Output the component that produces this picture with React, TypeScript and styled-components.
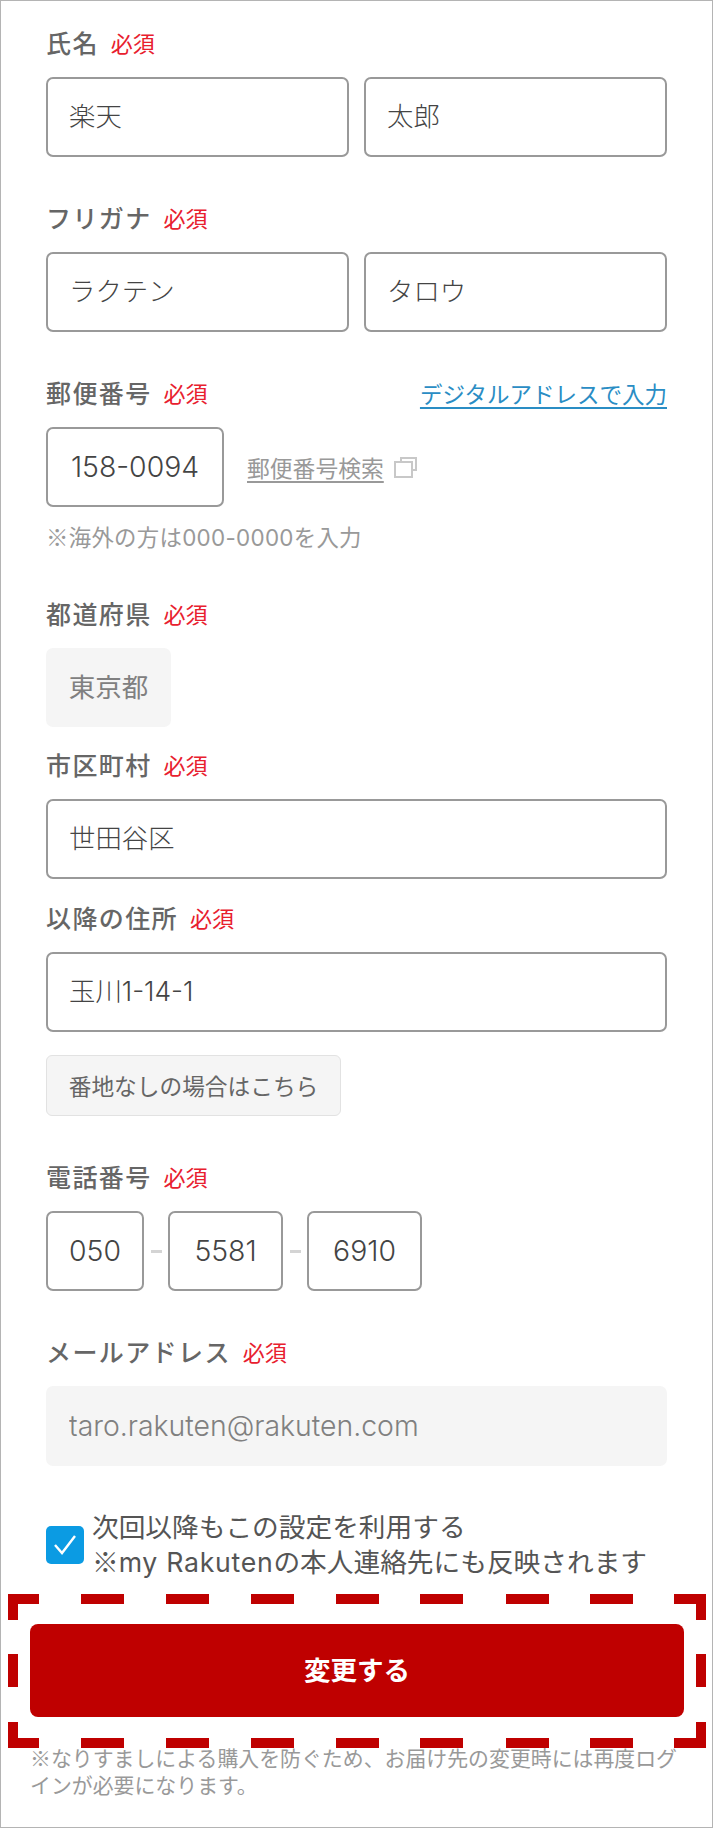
import React from 'react';
import styled, { createGlobalStyle } from 'styled-components';

const GlobalStyle = createGlobalStyle`
	html, body {
		margin: 0;
		padding: 0;
		background: #fff;
	}
	* {
		box-sizing: border-box;
	}
	body {
		font-family: Inter, "Noto Sans CJK JP", sans-serif;
	}
`;

const Page = styled.div`
	width: 713px;
	height: 1828px;
	border: 1px solid #b4b4b4;
	padding-top: 28px;
	overflow: hidden;
`;

const Form = styled.div`
	padding: 0 45px;
`;

const Field = styled.div<{ $bottom?: number }>`
	margin-bottom: ${({ $bottom }) => $bottom ?? 47}px;
`;

const LabelRow = styled.div`
	display: flex;
	align-items: center;
	justify-content: space-between;
	height: 32px;
	margin-bottom: 16px;
`;

const LabelGroup = styled.div`
	display: flex;
	align-items: center;
	gap: 12px;
	margin-bottom: 6px;
`;

const Label = styled.span`
	font-size: 25px;
	letter-spacing: 1.4px;
	font-weight: 500;
	color: #666;
`;

const Required = styled.span`
	font-size: 22px;
	color: #e8202e;
`;

const BlueLink = styled.a`
	font-size: 22.5px;
	line-height: 30px;
	color: #2a8dc4;
	text-decoration: underline;
	text-underline-offset: 4px;
`;

const Row = styled.div`
	display: flex;
	align-items: center;
	gap: 15px;
`;

const TextInput = styled.input<{ $center?: boolean; $width?: number; $muted?: boolean; $latin?: boolean }>`
	display: block;
	flex: ${({ $width }) => ($width ? `0 0 ${$width}px` : '1 1 0')};
	width: ${({ $width }) => ($width ? `${$width}px` : '100%')};
	min-width: 0;
	height: 80px;
	padding: ${({ $center }) => ($center ? '0' : '0 21px')};
	padding-bottom: ${({ $latin }) => ($latin ? 2 : 6)}px;
	border: ${({ $muted }) => ($muted ? 'none' : '2px solid #999')};
	${({ $muted }) => ($muted ? 'padding-left: 23px;' : '')}
	border-radius: 7px;
	outline: none;
	background: ${({ $muted }) => ($muted ? '#f5f5f5' : '#fff')};
	font-family: inherit;
	font-size: ${({ $latin }) => ($latin ? 28.4 : 26.4)}px;
	font-weight: 300;
	color: ${({ $muted }) => ($muted ? '#808080' : '#444')};
	text-align: ${({ $center }) => ($center ? 'center' : 'left')};
`;

const SearchLink = styled.a`
	display: flex;
	align-items: center;
	gap: 10px;
	margin-left: 8px;
	font-size: 22.8px;
	color: #999;
`;

const SearchText = styled.span`
	text-decoration: underline;
	text-underline-offset: 4px;
`;

const Hint = styled.p`
	margin: 15px 0 0;
	font-size: 22.4px;
	letter-spacing: 0.3px;
	line-height: 32px;
	color: #999;
`;

const Kome = styled.span`
	font-family: "Noto Sans CJK JP", sans-serif;
	line-height: 1;
`;

const Spaced = styled.span`
	letter-spacing: 0.7px;
`;

const ReadonlyBox = styled.div`
	width: 125px;
	height: 79px;
	padding-bottom: 4px;
	display: flex;
	align-items: center;
	justify-content: center;
	border-radius: 7px;
	background: #f5f5f5;
	font-size: 26.5px;
	color: #808080;
`;

const SubButton = styled.button`
	display: block;
	width: 295px;
	height: 61px;
	margin-top: 23px;
	padding: 0;
	border: 1px solid #e2e2e2;
	border-radius: 6px;
	background: #f5f5f5;
	font-family: inherit;
	font-size: 22.7px;
	color: #666;
`;

const TelRow = styled.div`
	display: flex;
	align-items: center;
`;

const Dash = styled.span`
	width: 11px;
	height: 3px;
	margin: 0 6.5px;
	background: #d4d4d4;
`;

const CheckRow = styled.label`
	display: flex;
	align-items: center;
	gap: 8px;
`;

const CheckBox = styled.span`
	flex: none;
	width: 38px;
	height: 38px;
	display: flex;
	align-items: center;
	justify-content: center;
	border-radius: 5px;
	background: #0b9be3;
`;

const CheckText = styled.div`
	font-size: 26.7px;
	line-height: 35px;
	color: #555;
	white-space: nowrap;
`;

const ButtonFrame = styled.div`
	position: relative;
	margin: 14px 6px 0 7px;
	padding: 30px 22px 30px;
`;

const DashFrame = styled.svg`
	position: absolute;
	left: 0;
	top: 0;
	width: 698px;
	height: 154px;
`;

const Submit = styled.button`
	display: block;
	width: 100%;
	height: 93px;
	padding: 0 0 4px;
	border: none;
	border-radius: 8px;
	background: #bf0000;
	font-family: inherit;
	font-size: 26.5px;
	font-weight: 700;
	color: #fff;
`;

const Note = styled.p`
	margin: -2px 0 0;
	padding: 0 29px;
	font-size: 20.9px;
	line-height: 27px;
	color: #999;
	white-space: nowrap;
`;

const topDashes = [73, 158, 243, 328, 412, 498, 582];

function Frame(): JSX.Element {
	return (
		<DashFrame viewBox="0 0 698 154">
			<g fill="#bf0000">
				{/* corners */}
				<path d="M0 0h31v10H10v16H0z" />
				<path d="M698 0h-32v10h22v16h10z" />
				<path d="M0 154h31v-10H10v-16H0z" />
				<path d="M698 154h-32v-10h22v-16h10z" />
				{topDashes.map((x) => (
					<React.Fragment key={x}>
						<rect x={x} y={0} width={43} height={10} />
						<rect x={x} y={144} width={43} height={10} />
					</React.Fragment>
				))}
				<rect x={0} y={60} width={10} height={33} />
				<rect x={688} y={60} width={10} height={33} />
			</g>
		</DashFrame>
	);
}

function Window(): JSX.Element {
	return (
		<svg width="23" height="21" viewBox="0 0 23 21" fill="none" stroke="#c8c8c8" strokeWidth="2">
			<path d="M7 5V1h15v12h-4" />
			<rect x="1" y="5" width="17" height="15" />
		</svg>
	);
}

function FieldLabel({ children }: { children: React.ReactNode }): JSX.Element {
	return (
		<LabelGroup>
			<Label>{children}</Label>
			<Required>必須</Required>
		</LabelGroup>
	);
}

export default function App(): JSX.Element {
	return (
		<Page>
			<GlobalStyle />
			<Form>
				<Field>
					<LabelRow>
						<FieldLabel>氏名</FieldLabel>
					</LabelRow>
					<Row>
						<TextInput readOnly value="楽天" />
						<TextInput readOnly value="太郎" />
					</Row>
				</Field>

				<Field>
					<LabelRow>
						<FieldLabel>フリガナ</FieldLabel>
					</LabelRow>
					<Row>
						<TextInput readOnly value="ラクテン" />
						<TextInput readOnly value="タロウ" />
					</Row>
				</Field>

				<Field $bottom={46}>
					<LabelRow>
						<FieldLabel>郵便番号</FieldLabel>
						<BlueLink>デジタルアドレスで入力</BlueLink>
					</LabelRow>
					<Row>
						<TextInput readOnly $center $latin $width={178} value="158-0094" />
						<SearchLink>
							<SearchText>郵便番号検索</SearchText>
							<Window />
						</SearchLink>
					</Row>
					<Hint>
						<Kome>※</Kome>海外の方は000-0000を入力
					</Hint>
				</Field>

				<Field $bottom={24}>
					<LabelRow>
						<FieldLabel>都道府県</FieldLabel>
					</LabelRow>
					<ReadonlyBox>東京都</ReadonlyBox>
				</Field>

				<Field $bottom={25}>
					<LabelRow>
						<FieldLabel>市区町村</FieldLabel>
					</LabelRow>
					<TextInput readOnly value="世田谷区" />
				</Field>

				<Field $bottom={47}>
					<LabelRow>
						<FieldLabel>以降の住所</FieldLabel>
					</LabelRow>
					<TextInput readOnly value="玉川1-14-1" />
					<SubButton>番地なしの場合はこちら</SubButton>
				</Field>

				<Field $bottom={47}>
					<LabelRow>
						<FieldLabel>電話番号</FieldLabel>
					</LabelRow>
					<TelRow>
						<TextInput readOnly $center $latin $width={98} value="050" />
						<Dash />
						<TextInput readOnly $center $latin $width={115} value="5581" />
						<Dash />
						<TextInput readOnly $center $latin $width={115} value="6910" />
					</TelRow>
				</Field>

				<Field $bottom={44}>
					<LabelRow>
						<FieldLabel>メールアドレス</FieldLabel>
					</LabelRow>
					<TextInput readOnly $muted $latin value="taro.rakuten@rakuten.com" />
				</Field>

				<CheckRow>
					<CheckBox>
						<svg width="24" height="22" viewBox="0 0 24 22" fill="none" stroke="#fff" strokeWidth="2.4">
							<path d="M2 11l7 8L22 2" />
						</svg>
					</CheckBox>
					<CheckText>
						次回以降もこの設定を利用する
						<br />
						<Kome>※</Kome>
						<Spaced>my Rakuten</Spaced>の本人連絡先にも反映されます
					</CheckText>
				</CheckRow>
			</Form>

			<ButtonFrame>
				<Frame />
				<Submit>変更する</Submit>
			</ButtonFrame>
			<Note>
				<Kome>※</Kome>なりすましによる購入を防ぐため、お届け先の変更時には再度ログ
				<br />
				インが必要になります。
			</Note>
		</Page>
	);
}
